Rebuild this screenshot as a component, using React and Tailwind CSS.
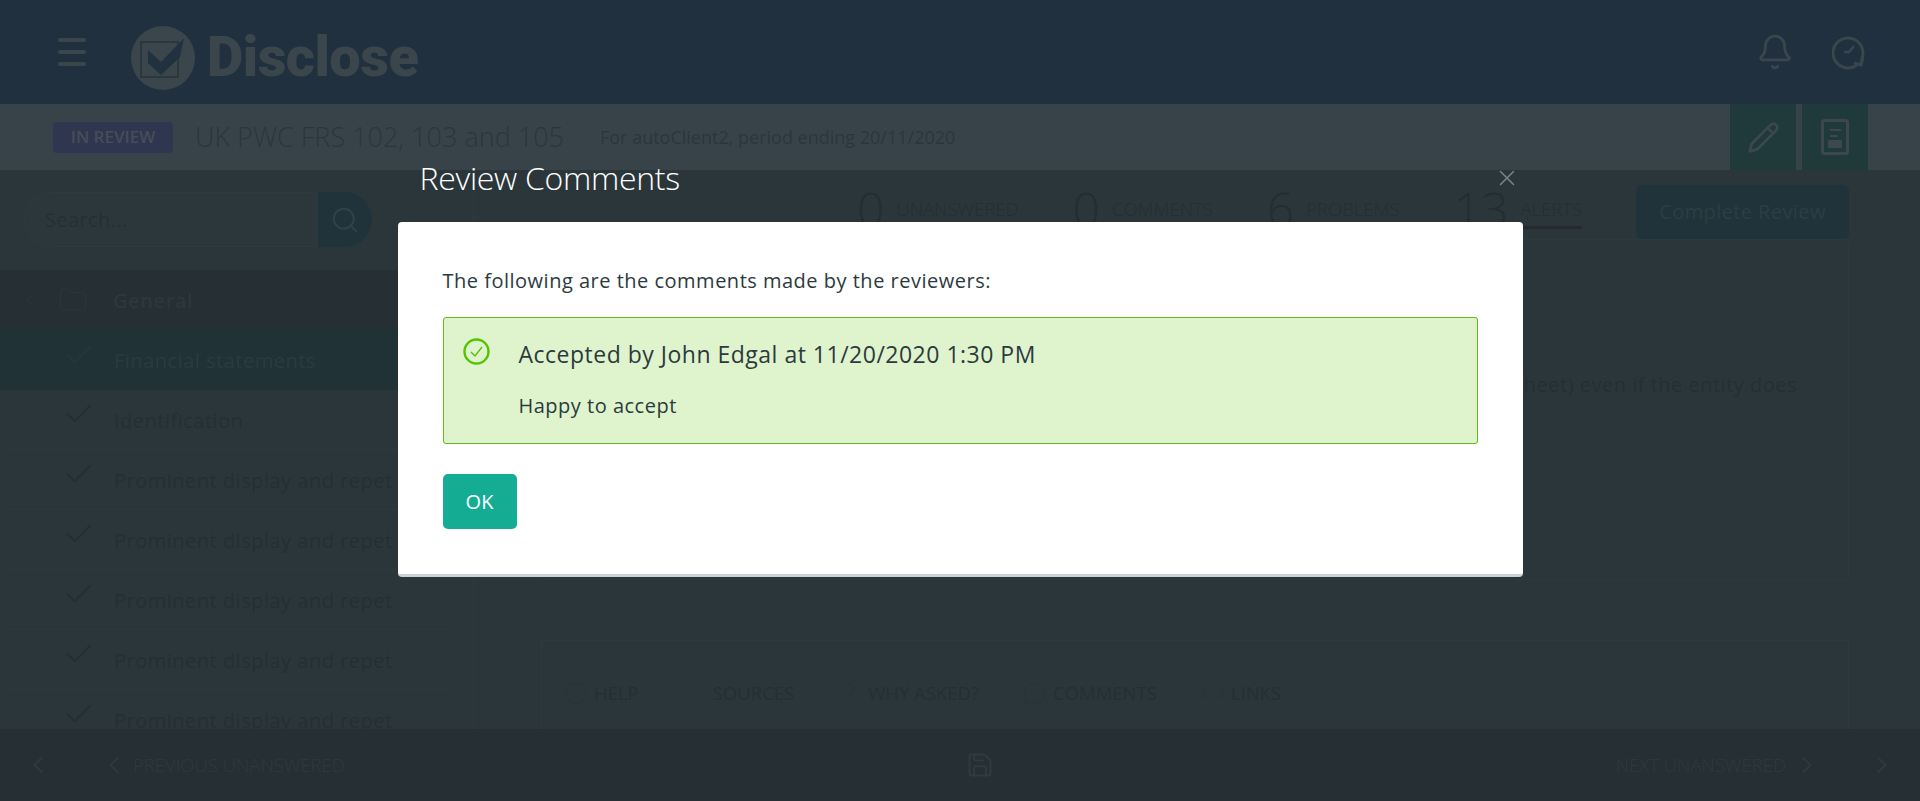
import React from "react";
import {
  Bell,
  Check,
  ChevronLeft,
  ChevronRight,
  Folder,
  Info,
  Link2,
  List,
  MessageCircle,
  Pencil,
  Save,
  Search,
  X,
} from "lucide-react";

const font = { fontFamily: '"Open Sans", "Noto Sans", sans-serif' };

const stats = [
  { value: "0", label: "UNANSWERED" },
  { value: "0", label: "COMMENTS" },
  { value: "6", label: "PROBLEMS" },
  { value: "13", label: "ALERTS", active: true },
];

const QuestionIcon = ({ className }) => (
  <svg width="24" height="24" viewBox="0 0 24 24" fill="none" stroke="currentColor" strokeWidth="1.2" className={className}>
    <path d="M8 5c1-3 8-3 8 1.500 0 4-4 4-4 8" />
    <path d="M12 19v2" />
  </svg>
);

const tabs = [
  { label: "HELP", icon: Info },
  { label: "SOURCES", icon: List },
  { label: "WHY ASKED?", icon: QuestionIcon },
  { label: "COMMENTS", icon: MessageCircle },
  { label: "LINKS", icon: Link2 },
];

const items = [
  "Identification",
  "Prominent display and repet",
  "Prominent display and repet",
  "Prominent display and repet",
  "Prominent display and repet",
  "Prominent display and repet",
];

const Logo = () => (
  <svg width="64" height="64" viewBox="0 0 64 64" className="shrink-0">
    <circle cx="32" cy="32" r="32" fill="#3a464c" />
    <path d="M10 16h37v35H10z" fill="none" stroke="#2b373d" strokeWidth="2" />
    <path d="M17 24l13 12L53 12l-4 19-19 18-13-12z" fill="#22313f" />
  </svg>
);

const ReportIcon = () => (
  <svg width="28" height="36" viewBox="0 0 28 36" fill="none">
    <rect x="1.500" y="1.500" width="25" height="33" rx="2" stroke="#3c484d" strokeWidth="3" />
    <path d="M9 11h11M9 17h8" stroke="#3c484d" strokeWidth="2" />
    <rect x="7" y="21" width="14" height="8" fill="#3c484d" />
  </svg>
);

const ClockIcon = () => (
  <svg width="34" height="36" viewBox="0 0 34 36" fill="none" stroke="#3a464c" strokeWidth="3">
    <path d="M25 31a15 15 0 1 1 6-12c0 3-.7 6-2 9" />
    <path d="M22 29l7 2 2-7" />
    <path d="M12 18h5l5-6" strokeWidth="2.500" />
  </svg>
);

const App = () => {
  return (
    <div
      className="relative h-screen flex flex-col overflow-hidden bg-[#2b363b] text-[#242f34]"
      style={font}
    >
      {/* Top bar */}
      <header className="h-[104px] shrink-0 bg-[#21303e] flex items-center">
        <div className="ml-[58px] w-[28px] flex flex-col gap-[8px]">
          <span className="h-[4px] rounded-sm bg-[#3a464c]" />
          <span className="h-[4px] rounded-sm bg-[#3a464c]" />
          <span className="h-[4px] rounded-sm bg-[#3a464c]" />
        </div>
        <div className="ml-[45px] mt-[11px]">
          <Logo />
        </div>
        <span
          className="ml-[12px] mt-[10px] text-[56px] leading-none font-black tracking-[-0.5px] text-[#3a464c]"
          style={{ fontFamily: "Roboto, sans-serif" }}
        >
          Disclose
        </span>
        <div className="ml-auto mr-[54px] flex items-center gap-[38px]">
          <Bell size={38} strokeWidth={1.8} className="text-[#3a464c]" />
          <ClockIcon />
        </div>
      </header>

      {/* Title bar */}
      <div className="h-[66px] shrink-0 bg-[#384349] flex items-center pl-[53px] pr-[52px]">
        <span className="w-[120px] h-[31px] rounded bg-[#2f3650] flex items-center justify-center text-[17px] font-semibold text-[#474d58]">
          IN REVIEW
        </span>
        <span className="ml-[22px] text-[27px] font-light text-[#2b363c]">
          UK PWC FRS 102, 103 and 105
        </span>
        <span className="ml-[36px] text-[18px] text-[#2b363c]">
          For autoClient2, period ending 20/11/2020
        </span>
        <div className="ml-auto flex self-stretch gap-[6px]">
          <div className="w-[66px] bg-[#20393b] flex items-center justify-center">
            <Pencil size={33} strokeWidth={2} className="text-[#3c484d]" />
          </div>
          <div className="w-[66px] bg-[#20393b] flex items-center justify-center">
            <ReportIcon />
          </div>
        </div>
      </div>

      {/* Body */}
      <div className="flex-1 min-h-0 flex">
        <aside className="w-[474px] shrink-0 border-r border-[#2e393e] flex flex-col overflow-hidden">
          <div className="h-[100px] shrink-0 flex items-start pt-[22px] pl-[24px]">
            <div className="w-[294px] h-[55px] rounded-l-[28px] border border-[#2f3a3f] bg-[#2c373c] flex items-center pl-[20px] text-[20px] tracking-[0.4px] text-[#242f34]">
              Search...
            </div>
            <div className="w-[54px] h-[55px] rounded-r-[28px] bg-[#20333a] flex items-center justify-center">
              <Search size={30} strokeWidth={1.6} className="text-[#2f4249]" />
            </div>
          </div>
          <div className="h-[59px] shrink-0 bg-[#252f34] flex items-center">
            <ChevronLeft size={24} strokeWidth={1.2} className="ml-[18px] text-[#2a353a]" />
            <Folder size={30} strokeWidth={1} className="ml-[16px] text-[#2a353a]" />
            <span className="ml-[25px] mt-[2px] text-[20px] tracking-[0.6px] font-semibold text-[#2c383c]">General</span>
          </div>
          <div className="h-[61px] shrink-0 bg-[#203236] flex items-center pl-[62px]">
            <Check size={34} strokeWidth={1.3} className="-mt-[9px] text-[#24373b]" />
            <span className="ml-[18px] mt-[2px] text-[20px] tracking-[0.5px] text-[#2a3b3f]">Financial statements</span>
          </div>
          {items.map((item, i) => (
            <div
              key={i}
              className="h-[60px] shrink-0 ml-[4px] mr-[20px] border-b border-[#2e393e] flex items-center pl-[58px]"
            >
              <Check size={34} strokeWidth={1.3} className="-mt-[12px] text-[#222f33]" />
              <span className="ml-[18px] mt-[3px] text-[20px] tracking-[0.5px] text-[#242f34] whitespace-nowrap">{item}</span>
            </div>
          ))}
        </aside>

        <main className="flex-1 min-w-0 flex flex-col pr-[71px] pl-[67px] overflow-hidden">
          <div className="h-[69px] shrink-0 flex justify-end items-start pt-[15px]">
            <div className="flex items-start">
              {stats.map((s) => (
                <div key={s.label} className="flex items-start gap-[12px] mr-[54px] -mt-[4px]">
                  <span className="text-[48px] leading-[56px] font-light text-[#222e33]">{s.value}</span>
                  <span
                    className={`mt-[10px] h-[38px] leading-[36px] text-[18.5px] font-light text-[#222e33] border-b ${
                      s.active ? "border-b-[3px] border-[#2a2a2e]" : "border-[#2e3a40]"
                    }`}
                  >
                    {s.label}
                  </span>
                </div>
              ))}
            </div>
            <button className="w-[213px] h-[54px] rounded-md bg-[#20333a] text-[20px] tracking-[0.4px] font-medium text-[#2b3e43]">
              Complete Review
            </button>
          </div>

          <div className="h-[341px] shrink-0 border border-[#2e393e] rounded-sm pr-[51px] pt-[130px] text-right text-[20px] tracking-[0.5px] whitespace-nowrap overflow-hidden">
            balance sheet) even if the entity does
          </div>

          <div className="flex-1 min-h-0 mt-[60px] border-l border-r border-t border-[#2e393e] pl-[22px] pt-[32px] flex text-[18.5px]">
            {tabs.map(({ label, icon: Icon }) => (
              <div key={label} className="flex items-center gap-[6px] mr-[44px] h-[40px]">
                <Icon size={24} strokeWidth={1.2} className="text-[#29343a]" />
                {label}
              </div>
            ))}
          </div>
        </main>
      </div>

      {/* Footer */}
      <footer className="h-[72px] shrink-0 bg-[#252f34] flex items-center text-[18.5px] text-[#2f3a40]">
        <ChevronLeft size={28} strokeWidth={1.6} className="ml-[24px] text-[#2f3a40]" />
        <ChevronLeft size={28} strokeWidth={1.6} className="ml-[48px] text-[#2f3a40]" />
        <span className="ml-[5px] font-light">PREVIOUS UNANSWERED</span>
        <Save size={28} strokeWidth={1.6} className="ml-[621px] text-[#303b41]" />
        <span className="ml-auto font-light">NEXT UNANSWERED</span>
        <ChevronRight size={28} strokeWidth={1.6} className="ml-[7px] text-[#2f3a40]" />
        <ChevronRight size={28} strokeWidth={1.6} className="ml-[47px] mr-[24px] text-[#2f3a40]" />
      </footer>

      {/* Review comments dialog */}
      <div className="absolute inset-0 flex justify-center">
        <div className="w-[1125px] relative pt-[222px]">
          <h2 className="absolute left-[22px] top-[155px] text-[32px] leading-[46px] tracking-[-0.3px] font-light text-white">
            Review Comments
          </h2>
          <X size={26} strokeWidth={1.4} className="absolute right-[3px] top-[165px] text-[#75838a]" />
          <div className="h-[355px] bg-white rounded border-b-[3px] border-[#ccd1d5] px-[45px] pt-[45px] text-[#2c3a40]">
            <p className="text-[20px] tracking-[0.5px] leading-[28px]">
              The following are the comments made by the reviewers:
            </p>
            <div className="mt-[22px] h-[127px] w-[1035px] rounded-[3px] border border-[#5dbb1a] bg-[#dff4cc] flex pl-[19px] pt-[20px]">
              <svg width="27" height="27" viewBox="0 0 27 27" fill="none" className="shrink-0">
                <circle cx="13.500" cy="13.500" r="12" stroke="#52c400" strokeWidth="2.400" />
                <path d="M8 14l4 4 7-9" stroke="#52c400" strokeWidth="1.300" />
              </svg>
              <div className="ml-[29px] pt-[1px]">
                <div className="text-[23px] tracking-[0.5px] leading-[31px]">
                  Accepted by John Edgal at 11/20/2020 1:30 PM
                </div>
                <div className="mt-[22px] text-[20px] tracking-[0.5px] leading-[28px]">Happy to accept</div>
              </div>
            </div>
            <button className="mt-[30px] w-[74px] h-[55px] rounded-[5px] bg-[#14ac93] text-white text-[20px] font-medium">
              OK
            </button>
          </div>
        </div>
      </div>
    </div>
  );
};

export default App;
